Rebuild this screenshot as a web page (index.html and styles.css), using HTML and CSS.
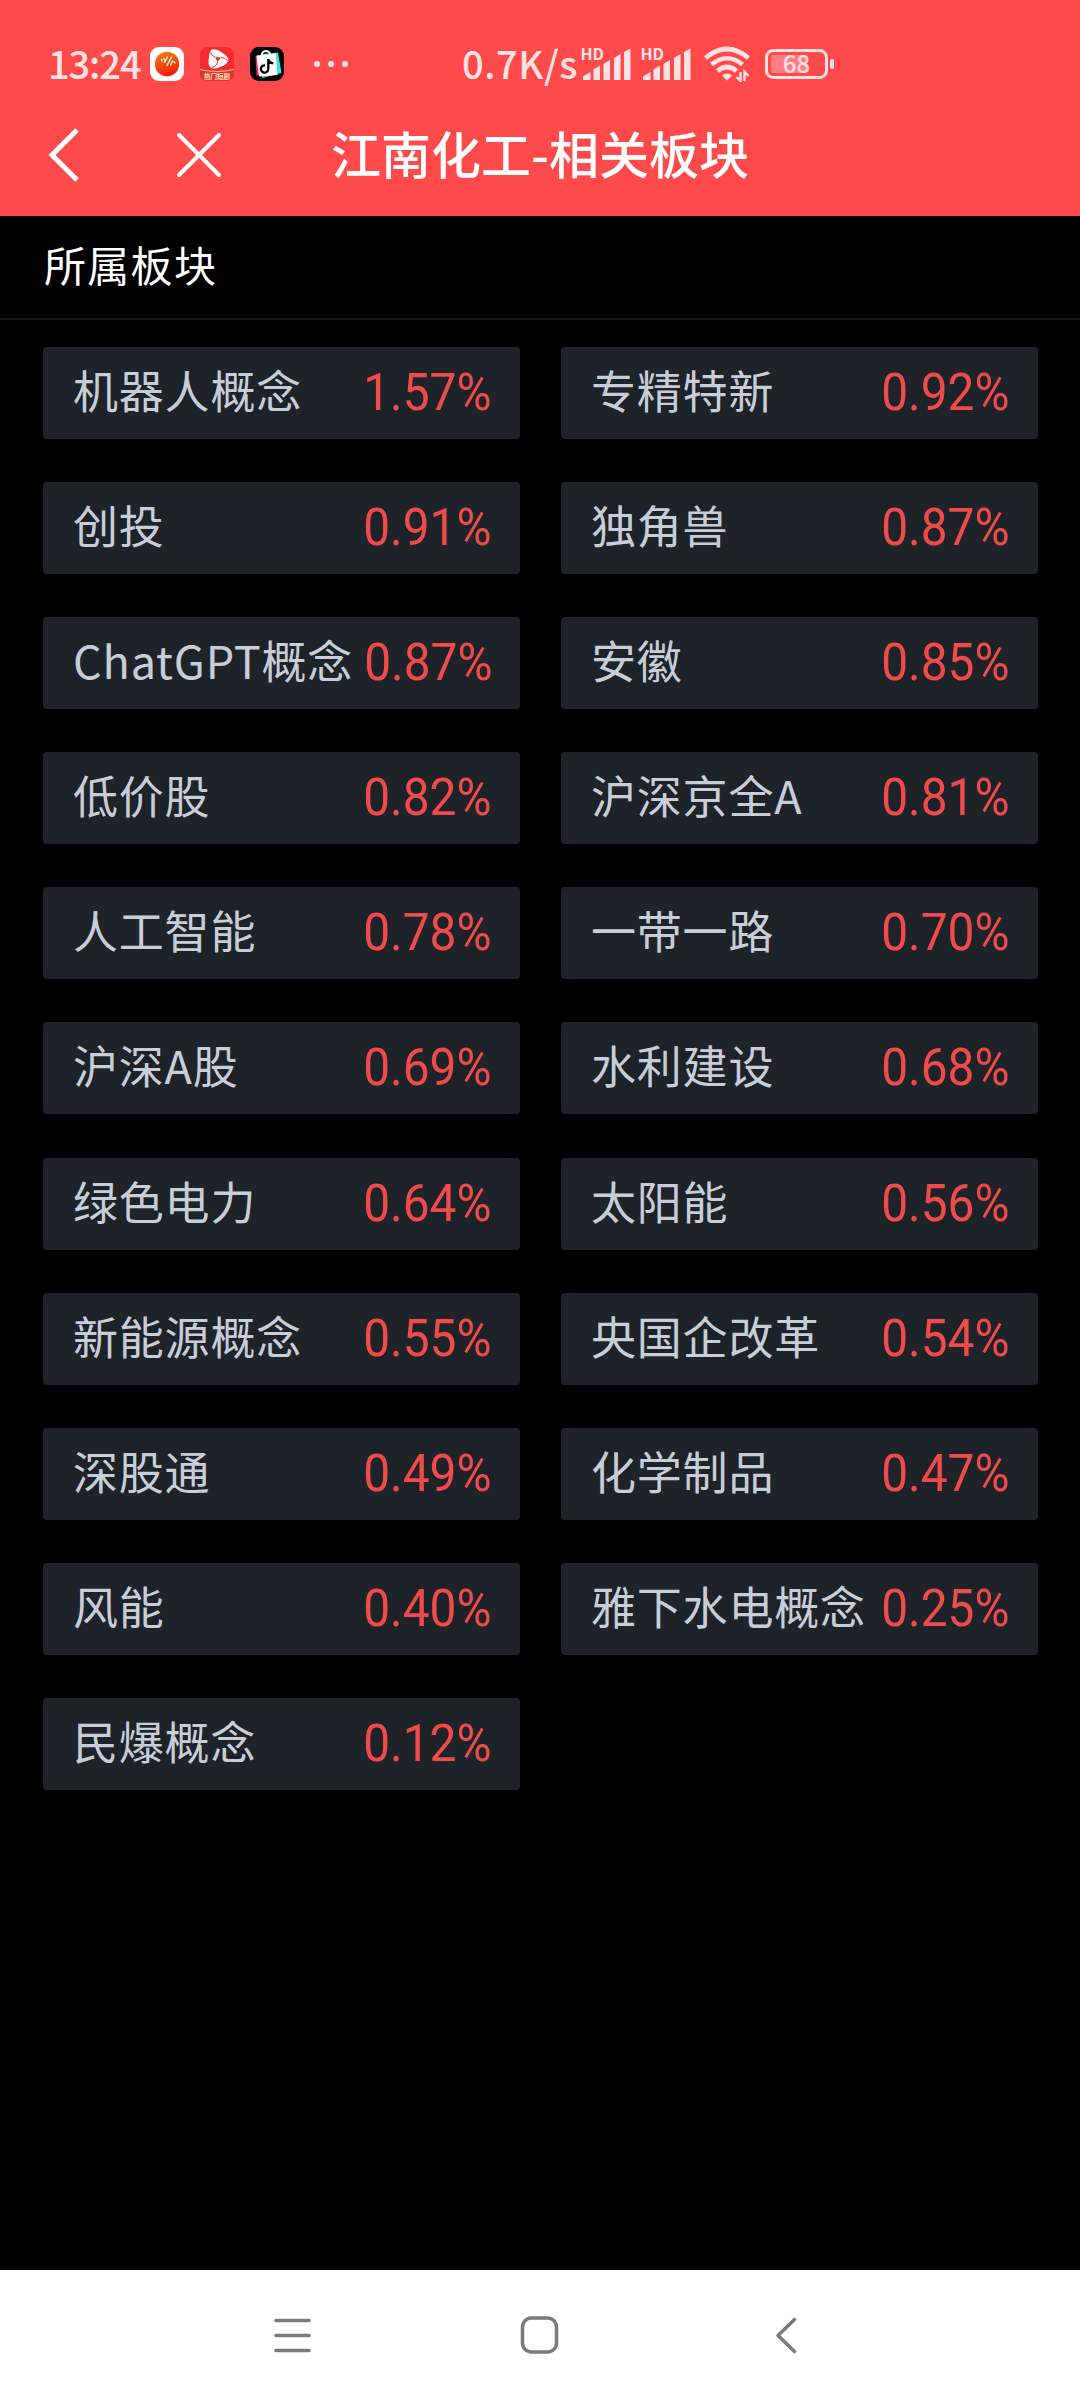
FILE: index.html
```
<!DOCTYPE html>
<html lang="zh-CN">
<head>
    <meta charset="UTF-8">
    <meta name="viewport" content="width=device-width, initial-scale=1.0">
    <title>江南化工-相关板块</title>
    <link rel="stylesheet" href="styles.css">
</head>
<body>
    <div class="page">
        <header class="header">
            <div class="status">
                <span class="time">13:24</span>
                <div class="apps">
                    <svg width="34" height="34" viewBox="0 0 34 34">
                        <defs>
                            <linearGradient id="orange" x1="0" y1="0" x2="0.3" y2="1">
                                <stop offset="0" stop-color="#f08a12"/>
                                <stop offset="1" stop-color="#f0200c"/>
                            </linearGradient>
                        </defs>
                        <rect width="34" height="34" rx="9" fill="#fff"/>
                        <circle cx="17" cy="17" r="12.2" fill="url(#orange)"/>
                        <path d="M11.500 12.500l.8 1.500M14 11.500l.8 2M14.500 15.500l3-5.500M17 18.500l4.500-8.500M20.500 18l2-4M24 14.500l.8 1.500" stroke="#fff" stroke-width="1.3" stroke-linecap="round" fill="none"/>
                    </svg>
                    <svg width="34" height="34" viewBox="0 0 34 34">
                        <rect width="34" height="34" rx="8" fill="#f52b32"/>
                        <path d="M12 2.500Q17 1.500 21 5Q28 9 28.500 13Q27 18 20 20Q13 23 10 20Q7.500 17 9 10Q9 4 12 2.500Z" fill="#fff"/>
                        <path d="M15 10l6 .5-3.500 4.500z" fill="#d8382c"/>
                        <path d="M15 10Q12 9 10.500 5.500M21 10.500Q24 10 27.500 13.500M17.500 15Q17 19 12 20.500" fill="none" stroke="#f52b32" stroke-width="1"/>
                        <path d="M0 23Q17 27 34 23V26Q34 34 26 34H8Q0 34 0 26Z" fill="#d8382c"/>
                        <path d="M0 22.500Q17 26.500 34 22.500" fill="none" stroke="#ffc58a" stroke-width="1"/>
                        <text class="app-text" x="17" y="32" text-anchor="middle">热门短剧</text>
                    </svg>
                    <svg width="34" height="34" viewBox="0 0 34 34">
                        <rect width="34" height="34" rx="9" fill="#000"/>
                        <path d="M5.500 9L22 7.500 21 29 6.500 28.500Z" fill="#f5265a"/>
                        <path d="M12 7L28 5.500 31.500 26 12 31Z" fill="#2ce6e0"/>
                        <path d="M6.500 8.500L26 6.500 27.500 28 9 29.500Z" fill="#fff"/>
                        <path d="M11.500 8Q12.500 4 16 4T20.500 8" fill="none" stroke="#fff" stroke-width="1.8"/>
                        <path d="M18.300 12V21.500A3.700 3.700 0 1 1 15 18.300M18.300 12.500Q19.500 16 23.300 16.300" fill="none" stroke="#000" stroke-width="2.300"/>
                    </svg>
                </div>
                <svg class="dots" width="36" height="8" viewBox="0 0 36 8" fill="#ffe3e3">
                    <circle cx="4" cy="4" r="3"/>
                    <circle cx="18" cy="4" r="3"/>
                    <circle cx="32" cy="4" r="3"/>
                </svg>
                <span class="speed">0.7K/s</span>
                <svg class="signal" width="50" height="48" viewBox="0 -7 50 48">
                    <text class="hd" x="-0.500" y="12.500">HD</text>
                    <path d="M2 33V29.500L9.500 25V33ZM12.500 33V22.500L19 18.500V33ZM22.500 33V17L29 13V33ZM33 33V11L39.500 7V33ZM43 33V5L49.500 1.500V33Z"/>
                </svg>
                <svg class="signal" width="50" height="48" viewBox="0 -7 50 48">
                    <text class="hd" x="-0.500" y="12.500">HD</text>
                    <path d="M2 33V29.500L9.500 25V33ZM12.500 33V22.500L19 18.500V33ZM22.500 33V17L29 13V33ZM33 33V11L39.500 7V33ZM43 33V5L49.500 1.500V33Z"/>
                </svg>
                <svg class="wifi" width="46" height="36" viewBox="0 0 46 36">
                    <path d="M1.500 12Q23 -6 44.500 12M7.500 18.500Q23 6 38.500 18.500M13.500 25Q23 17 32.500 25" fill="none" stroke="#ffe3e3" stroke-width="4.600"/>
                    <path d="M18 29.500Q23 25.500 28 29.500L23 34.500Z" fill="#ffe3e3"/>
                    <path d="M36.500 26V35L32.500 31M40.500 35V26L44.500 30" fill="none" stroke="#ffe3e3" stroke-width="2.400"/>
                </svg>
                <svg class="battery" width="70" height="46" viewBox="0 -8 70 46">
                    <rect x="1.500" y="1.500" width="60" height="27" rx="7" fill="none" stroke="#ffe3e3" stroke-width="3"/>
                    <rect x="6" y="6" width="35" height="18" rx="3" fill="#ff7f80"/>
                    <rect x="65" y="10" width="4" height="10" rx="2" fill="#ffe3e3"/>
                    <text class="level" x="31.500" y="24" text-anchor="middle">68</text>
                </svg>
            </div>
            <div class="titlebar">
                <div class="actions">
                    <svg width="32" height="56" viewBox="0 0 32 56">
                        <path d="M29 3L4 28L29 53" fill="none" stroke="#fff" stroke-width="5"/>
                    </svg>
                    <svg width="46" height="46" viewBox="0 0 46 46">
                        <path d="M3 3L43 43M43 3L3 43" stroke="#fff" stroke-width="4" stroke-linecap="round"/>
                    </svg>
                </div>
                <h1>江南化工-相关板块</h1>
                <div></div>
            </div>
        </header>

        <h2>所属板块</h2>

        <main class="list">
            <div class="item"><span class="name">机器人概念</span><span class="rate">1.57%</span></div>
            <div class="item"><span class="name">专精特新</span><span class="rate">0.92%</span></div>
            <div class="item"><span class="name">创投</span><span class="rate">0.91%</span></div>
            <div class="item"><span class="name">独角兽</span><span class="rate">0.87%</span></div>
            <div class="item"><span class="name">ChatGPT概念</span><span class="rate">0.87%</span></div>
            <div class="item"><span class="name">安徽</span><span class="rate">0.85%</span></div>
            <div class="item"><span class="name">低价股</span><span class="rate">0.82%</span></div>
            <div class="item"><span class="name">沪深京全A</span><span class="rate">0.81%</span></div>
            <div class="item"><span class="name">人工智能</span><span class="rate">0.78%</span></div>
            <div class="item"><span class="name">一带一路</span><span class="rate">0.70%</span></div>
            <div class="item"><span class="name">沪深A股</span><span class="rate">0.69%</span></div>
            <div class="item"><span class="name">水利建设</span><span class="rate">0.68%</span></div>
            <div class="item"><span class="name">绿色电力</span><span class="rate">0.64%</span></div>
            <div class="item"><span class="name">太阳能</span><span class="rate">0.56%</span></div>
            <div class="item"><span class="name">新能源概念</span><span class="rate">0.55%</span></div>
            <div class="item"><span class="name">央国企改革</span><span class="rate">0.54%</span></div>
            <div class="item"><span class="name">深股通</span><span class="rate">0.49%</span></div>
            <div class="item"><span class="name">化学制品</span><span class="rate">0.47%</span></div>
            <div class="item"><span class="name">风能</span><span class="rate">0.40%</span></div>
            <div class="item"><span class="name">雅下水电概念</span><span class="rate">0.25%</span></div>
            <div class="item"><span class="name">民爆概念</span><span class="rate">0.12%</span></div>
        </main>

        <nav class="navbar">
            <svg width="40" height="40" viewBox="0 0 40 40">
                <path d="M3 5.500H36M3 20.500H36M3 35.500H36"/>
            </svg>
            <svg width="40" height="40" viewBox="0 0 40 40">
                <rect x="2.500" y="3" width="34" height="34" rx="9"/>
            </svg>
            <svg width="40" height="40" viewBox="0 0 40 40">
                <path d="M27.500 4.500L11 20.500L27.500 36.500"/>
            </svg>
        </nav>
    </div>
</body>
</html>
```

FILE: styles.css
```
* {
    box-sizing: border-box;
}

body {
    margin: 0;
    background-color: #000;
    font-family: "Noto Sans CJK SC", sans-serif;
}

.page {
    display: flex;
    flex-direction: column;
    width: 1080px;
    height: 2400px;
}

/* header */
.header {
    height: 216px;
    background-color: #ff4a4c;
}

.status {
    display: flex;
    align-items: center;
    height: 94px;
    padding: 34px 0 0 48px;
    color: #ffe3e3;
    line-height: 57px;
    white-space: nowrap;
}

.time,
.speed {
    height: 60px;
    font-size: 38px;
    font-weight: 500;
}

.time {
    width: 102px;
    letter-spacing: -1.1px;
}

.apps {
    display: flex;
    gap: 16px;
}

.dots {
    margin-left: 29px;
}

.speed {
    width: 119px;
    margin-left: 113px;
    letter-spacing: 0.5px;
}

.signal {
    margin-right: 10px;
    fill: #ffe3e3;
    overflow: visible;
}

.hd {
    font-size: 16px;
    font-weight: 700;
}

.wifi {
    margin-left: 3px;
}

.battery {
    margin-left: 15px;
}

.level {
    font-size: 24px;
    font-weight: 500;
    fill: #ffe3e3;
}

.app-text {
    font-size: 6.5px;
    font-weight: 700;
    fill: #ffe0b8;
}

.titlebar {
    display: grid;
    grid-template-columns: 1fr auto 1fr;
    align-items: center;
    height: 122px;
}

.actions {
    display: flex;
    align-items: center;
    gap: 96px;
    padding-left: 48px;
}

h1 {
    margin: 0;
    padding-bottom: 6px;
    color: #fff;
    font-size: 50px;
    font-weight: 500;
    line-height: 72px;
}

h2 {
    height: 104px;
    margin: 0;
    padding-left: 44px;
    border-bottom: 2px solid #17181d;
    color: #fff;
    font-size: 42px;
    font-weight: 400;
    letter-spacing: 1.3px;
    line-height: 96px;
}

/* plate list */
.list {
    display: grid;
    flex: 1;
    grid-template-columns: 477px 477px;
    grid-auto-rows: 92px;
    align-content: start;
    gap: 43.1px 41px;
    padding: 27px 43px;
}

.item {
    display: flex;
    justify-content: space-between;
    padding: 0 29px 0 30px;
    border-radius: 4px;
    background-color: #1e232a;
    white-space: nowrap;
}

.name {
    color: #c9cdd8;
    font-size: 45px;
    letter-spacing: 0.8px;
    line-height: 85px;
}

.rate {
    color: #f04b48;
    font-family: Roboto, sans-serif;
    font-size: 52px;
    line-height: 91px;
    transform: scaleX(0.92);
    transform-origin: right;
}

/* system navigation */
.navbar {
    display: flex;
    justify-content: center;
    gap: 207px;
    height: 130px;
    padding-top: 45px;
    background-color: #fff;
}

.navbar svg {
    fill: none;
    stroke: #7a7a7a;
    stroke-width: 3.5;
    stroke-linecap: round;
    stroke-linejoin: round;
}
```
